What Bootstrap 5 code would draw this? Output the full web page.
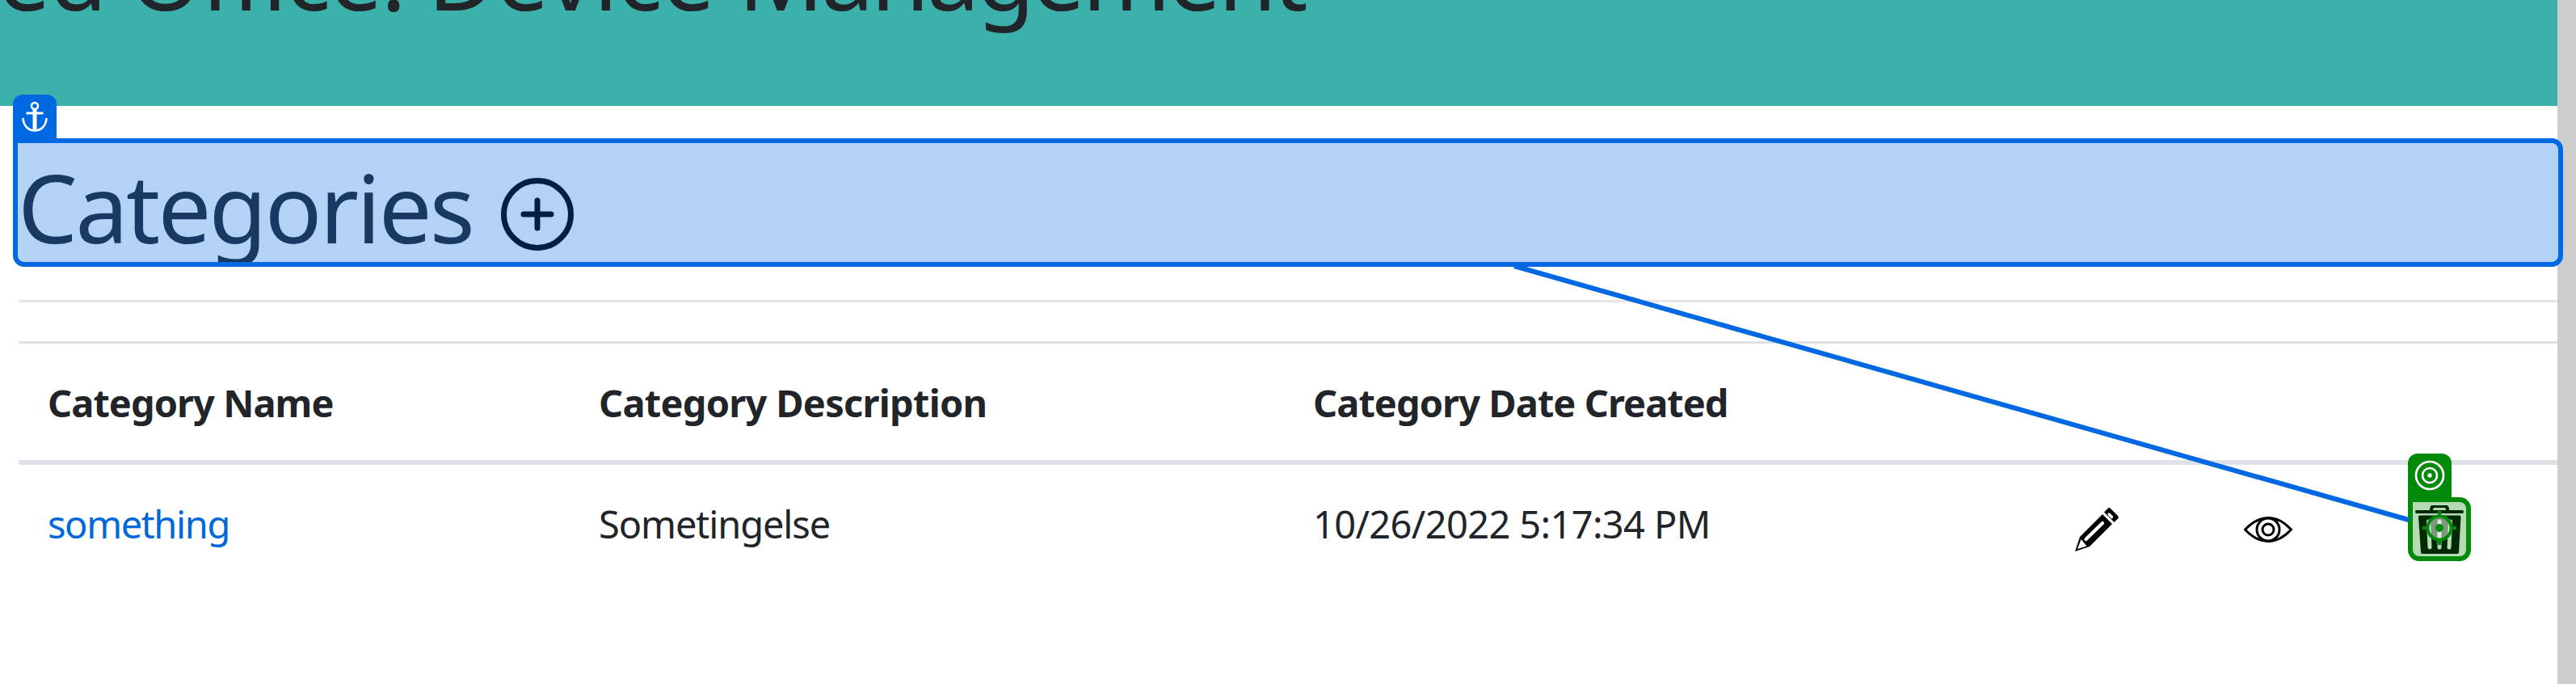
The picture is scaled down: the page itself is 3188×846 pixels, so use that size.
<!DOCTYPE html>
<html lang="en">
<head>
<meta charset="utf-8">
<meta name="viewport" content="width=device-width, initial-scale=1">
<title>Device Management</title>
<link href="https://cdn.jsdelivr.net/npm/bootstrap@5.3.0/dist/css/bootstrap.min.css" rel="stylesheet">
<style>
body{font-family:"Noto Sans","Open Sans",sans-serif;color:#212529;background:#fff}
.app-page{height:846px;overflow:hidden}
.side-strip{width:23px;background:#cdcdcd}
.top-banner{height:131px;background:#3cb0aa;overflow:hidden}
.banner-title{width:1615px;font-size:117px;line-height:120px;margin-top:-92px;white-space:nowrap;font-weight:400}
.w1{letter-spacing:-2px}.w2{letter-spacing:-1px}.w3{letter-spacing:-3.6px}
.anchor-box{height:159px;width:3156px;margin:40px 0 0 16px;background:#b4d2f6;border:6px solid #0068e1;border-radius:0 14px 14px 14px}
.anchor-inner{height:147px;overflow:hidden}
.page-title{width:553px;font-size:117px;line-height:160px;letter-spacing:-2.8px;color:#183a62;font-weight:400;margin:-1px 0 0 0;white-space:nowrap}
.plus-icon{margin:43px 0 0 45px}
.tab-flag{width:54px;height:54px;border-radius:12px 12px 0 0}
.anchor-flag{left:-6px;top:-60px;background:#0068e1}
.rule{height:3px;background:#e5e5e5;margin:41px 0 48px 23px}
.cat-table{width:3142px;margin-left:23px;table-layout:fixed;border-collapse:separate;border-spacing:0;font-size:47px;line-height:72px;color:#212529}
.cat-table th,.cat-table td{padding:37px 36px 35px;border:0;white-space:nowrap;background:none;text-align:left;vertical-align:top}
.cat-table th{border-top:3px solid #dee2e6;border-bottom:6px solid #dee2e6}
.cat-table td.act{padding:50px 38px 0;line-height:0;overflow:visible}
.cat-table a{color:#0068d9}
.ls-a{letter-spacing:-.97px}.ls-b{letter-spacing:-.75px}.ls-c{letter-spacing:-.96px}.ls-d{letter-spacing:-1.4px}.ls-e{letter-spacing:-1.1px}.ls-f{letter-spacing:-.64px}
.target-box{left:-9px;top:-10px;width:78px;height:79px;border:6px solid #048a0a;border-radius:0 14px 14px 14px;background:rgba(4,138,10,.3)}
.target-flag{left:-6px;top:-60px;background:#048a0a}
.target-sight{left:12px;top:11px}
.act-item{width:60px;height:60px}
.link-line{left:0;top:0;pointer-events:none}
</style>
</head>
<body>
<div class="app-page d-flex position-relative">
  <main class="flex-grow-1" style="min-width:0">
    <header class="top-banner">
      <div class="banner-title d-flex justify-content-end"><span style="white-space:pre"><span class="w1">ed Office: </span><span class="w2">Device </span><span class="w3">Management</span></span></div>
    </header>
    <section class="anchor-box position-relative">
      <div class="anchor-inner d-flex align-items-start">
        <h1 class="page-title">Categories</h1>
        <svg class="plus-icon" width="90" height="90" viewBox="0 0 90 90" fill="none" stroke="#001f44" stroke-width="7"><circle cx="45" cy="45" r="41.5"/><path d="M45 28v34M28 45h34" stroke-linecap="round"/></svg>
      </div>
      <div class="tab-flag anchor-flag position-absolute">
        <svg class="d-block" width="54" height="54" viewBox="0 0 54 54" fill="none" stroke="#fff"><circle cx="27" cy="14" r="4" stroke-width="2.6"/><path d="M27 18v26" stroke-width="5"/><path d="M16.500 23h21" stroke-width="3"/><path d="M12.500 29c.5 10 7 15.500 14.500 15.500s14-5.500 14.500-15.500" stroke-width="2.600"/></svg>
      </div>
    </section>
    <div class="rule"></div>
    <table class="cat-table">
      <colgroup><col style="width:682px"><col style="width:884px"><col style="width:938px"><col style="width:212px"><col style="width:212px"><col style="width:214px"></colgroup>
      <thead><tr><th class="ls-a">Category Name</th><th class="ls-b">Category Description</th><th class="ls-c">Category Date Created</th><th></th><th></th><th></th></tr></thead>
      <tbody><tr>
        <td class="ls-d"><a href="#" class="text-decoration-none">something</a></td>
        <td class="ls-e">Sometingelse</td>
        <td class="ls-f">10/26/2022 5:17:34 PM</td>
        <td class="act"><svg width="60" height="60" viewBox="0 0 60 60"><path fill="#000" fill-rule="evenodd" d="M37 11 49 23 21 51 3 57 9 39ZM10.500 42 6 54 17.500 50.500ZM15 40.500a2 2 0 0 0 3 3L38.500 23.500a2 2 0 0 0-3-3Z"/><path fill="#000" fill-rule="evenodd" d="M39 8.500 43 4.500Q45 2 47 4L56 13Q58 15 55.500 17L51.500 21ZM44 9.500q-1 2 0 3l4 4q2 0 2-2v-1l-4-4z"/></svg></td>
        <td class="act"><svg width="60" height="60" viewBox="0 0 60 60" fill="none" stroke="#000"><path d="M1.500 30Q15 15.500 30 15.500T58.500 30Q45 44.500 30 44.500T1.500 30Z" stroke-width="3" stroke-linejoin="round"/><circle cx="30" cy="30" r="14" stroke-width="3"/><circle cx="30" cy="30" r="7" stroke-width="3"/></svg></td>
        <td class="act"><div class="act-item position-relative">
          <svg width="60" height="60" viewBox="0 0 60 60"><path d="M20 7V5q0-4 4-4h12q4 0 4 4v2" fill="none" stroke="#000" stroke-width="4"/><rect x="0" y="6" width="60" height="4" rx="2"/><path fill-rule="evenodd" d="M4 14Q4 12.500 6 12.500H55Q56.500 12.500 56.500 14L54 58Q54 60 52 60H9Q7 60 7 58ZM14 20a2.500 2.500 0 0 1 5 0l1.500 32a2.500 2.500 0 0 1-5 0ZM27.500 20a2.500 2.500 0 0 1 5 0v32a2.500 2.500 0 0 1-5 0ZM41 20a2.500 2.500 0 0 1 5 0l-1.500 32a2.500 2.500 0 0 1-5 0Z"/></svg>
          <div class="target-box position-absolute">
            <svg class="target-sight position-absolute" width="42" height="42" viewBox="0 0 42 42" stroke="#048a0a"><circle cx="21" cy="21" r="14.500" fill="#fff" fill-opacity=".5" stroke-width="4"/><path d="M21 0v6M21 36v6M0 21h6M36 21h6" stroke-width="4"/><circle cx="21" cy="21" r="5" fill="#048a0a" stroke="none"/></svg>
            <div class="tab-flag target-flag position-absolute"><svg width="54" height="54" viewBox="0 0 54 54" fill="none" stroke="#fff" stroke-width="2.700"><circle cx="27" cy="27" r="17"/><circle cx="27" cy="27" r="9"/><circle cx="27" cy="27" r="2.700" fill="#fff" stroke="none"/></svg></div>
          </div>
        </div></td>
      </tr></tbody>
    </table>
  </main>
  <aside class="side-strip flex-shrink-0"></aside>
  <svg class="link-line position-absolute" width="3188" height="846" viewBox="0 0 3188 846"><path d="M1874 329 2981 643" stroke="#0068e1" stroke-width="6"/></svg>
</div>
<script src="https://cdn.jsdelivr.net/npm/bootstrap@5.3.0/dist/js/bootstrap.bundle.min.js"></script>
</body>
</html>
